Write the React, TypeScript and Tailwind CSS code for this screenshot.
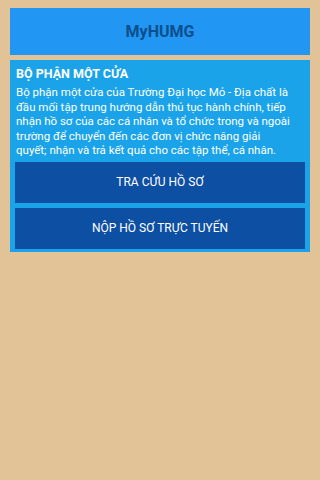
export default function App() {
  return (
    <div className="min-h-[480px] w-[320px] bg-[#e2c398] px-[10px] pt-[8px] font-['Roboto',sans-serif]">
      <header className="flex h-[47px] items-center justify-center bg-[#2196f3]">
        <h1 className="text-[16px] font-bold text-[#0d4f8c]">MyHUMG</h1>
      </header>
      <section className="mt-[5px] bg-[#1aa3e8] px-[5px] pb-[3px] pt-[6px]">
        <h2 className="px-[1px] text-[12.5px] font-bold leading-[16px] text-white">BỘ PHẬN MỘT CỬA</h2>
        <p className="mt-[3px] px-[1px] text-[11.5px] leading-[14.5px] text-white">
          Bộ phận một cửa của Trường Đại học Mỏ - Địa chất là đầu mối tập trung hướng dẫn thủ tục hành chính, tiếp nhận hồ sơ của các cá nhân và tổ chức trong và ngoài trường để chuyển đến các đơn vị chức năng giải
          <br />
          quyết; nhận và trả kết quả cho các tập thể, cá nhân.
        </p>
        <div className="mt-[4px] flex flex-col gap-[5px]">
          {["TRA CỨU HỒ SƠ", "NỘP HỒ SƠ TRỰC TUYẾN"].map((t) => (
            <button key={t} type="button" className="h-[41px] bg-[#0d4fa3] text-[12px] text-white">
              {t}
            </button>
          ))}
        </div>
      </section>
    </div>
  );
}
